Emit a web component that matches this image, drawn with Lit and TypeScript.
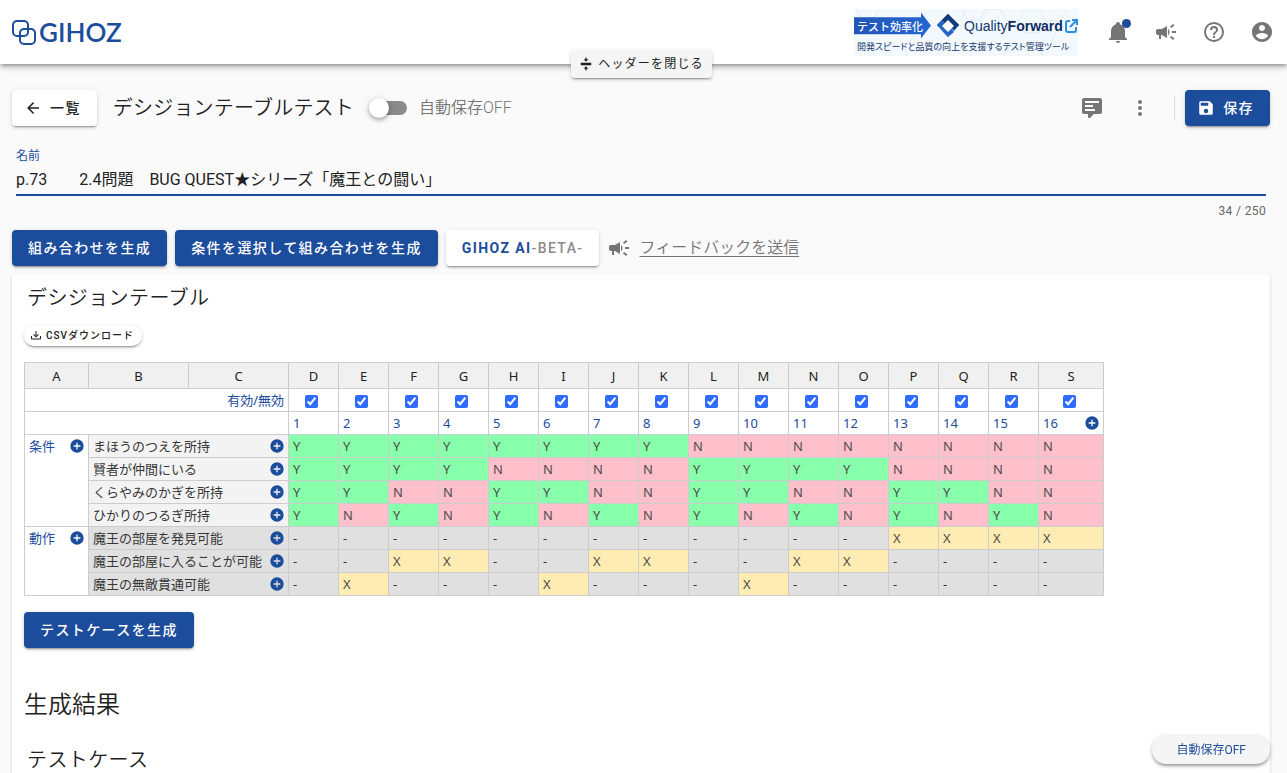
import { LitElement, html, css, svg, nothing } from "lit";
import { customElement, property } from "lit/decorators.js";
import { classMap } from "lit/directives/class-map.js";

const ICONS: Record<string, string> = {
  bell: "M21,19V20H3V19L5,17V11C5,7.9 7.03,5.17 10,4.29C10,4.19 10,4.1 10,4A2,2 0 0,1 12,2A2,2 0 0,1 14,4C14,4.1 14,4.19 14,4.29C16.97,5.17 19,7.9 19,11V17L21,19M14,21A2,2 0 0,1 12,23A2,2 0 0,1 10,21",
  campaign:
    "M18 11v2h4v-2h-4zm-2 6.61c.96.71 2.21 1.65 3.2 2.39.4-.53.8-1.07 1.2-1.6-.99-.74-2.24-1.68-3.2-2.4-.4.54-.8 1.08-1.2 1.61zM20.4 5.6c-.4-.53-.8-1.07-1.2-1.6-.99.74-2.24 1.68-3.2 2.4.4.53.8 1.07 1.2 1.6.96-.72 2.21-1.65 3.2-2.4zM4 9c-1.1 0-2 .9-2 2v2c0 1.1.9 2 2 2h1v4h2v-4h1l5 3V6L8 9H4zm11.5 3c0-1.33-.58-2.53-1.5-3.35v6.69c.92-.81 1.5-2.01 1.5-3.34z",
  help: "M11,18H13V16H11V18M12,2A10,10 0 0,0 2,12A10,10 0 0,0 12,22A10,10 0 0,0 22,12A10,10 0 0,0 12,2M12,20C7.59,20 4,16.41 4,12C4,7.59 7.59,4 12,4C16.41,4 20,7.59 20,12C20,16.41 16.41,20 12,20M12,6A4,4 0 0,0 8,10H10A2,2 0 0,1 12,8A2,2 0 0,1 14,10C14,12 11,11.75 11,15H13C13,12.75 16,12.5 16,10A4,4 0 0,0 12,6Z",
  account:
    "M12 2C6.48 2 2 6.48 2 12s4.48 10 10 10 10-4.48 10-10S17.52 2 12 2zm0 3c1.66 0 3 1.34 3 3s-1.34 3-3 3-3-1.34-3-3 1.34-3 3-3zm0 14.2c-2.5 0-4.71-1.28-6-3.22.03-1.99 4-3.08 6-3.08 1.99 0 5.97 1.09 6 3.08-1.29 1.94-3.5 3.22-6 3.22z",
  comment:
    "M9,22A1,1 0 0,1 8,21V18H4A2,2 0 0,1 2,16V4C2,2.89 2.9,2 4,2H20A2,2 0 0,1 22,4V16A2,2 0 0,1 20,18H13.9L10.2,21.71C10,21.9 9.75,22 9.5,22V22H9M5,5V7H19V5H5M5,9V11H13V9H5M5,13V15H15V13H5Z",
  dots: "M12,16A2,2 0 0,1 14,18A2,2 0 0,1 12,20A2,2 0 0,1 10,18A2,2 0 0,1 12,16M12,10A2,2 0 0,1 14,12A2,2 0 0,1 12,14A2,2 0 0,1 10,12A2,2 0 0,1 12,10M12,4A2,2 0 0,1 14,6A2,2 0 0,1 12,8A2,2 0 0,1 10,6A2,2 0 0,1 12,4Z",
  save: "M15,9H5V5H15M12,19A3,3 0 0,1 9,16A3,3 0 0,1 12,13A3,3 0 0,1 15,16A3,3 0 0,1 12,19M17,3H5C3.89,3 3,3.9 3,5V19A2,2 0 0,0 5,21H19A2,2 0 0,0 21,19V7L17,3Z",
  back: "M20,11V13H8L13.5,18.5L12.08,19.92L4.16,12L12.08,4.08L13.5,5.5L8,11H20Z",
  plus: "M17,13H13V17H11V13H7V11H11V7H13V11H17M12,2A10,10 0 0,0 2,12A10,10 0 0,0 12,22A10,10 0 0,0 22,12A10,10 0 0,0 12,2Z",
  download:
    "M2 12H4V17H20V12H22V17C22 18.11 21.11 19 20 19H4C2.9 19 2 18.11 2 17V12M12 15L17.55 9.54L16.13 8.13L13 11.25V2H11V11.25L7.88 8.13L6.46 9.55L12 15Z",
  collapse:
    "M8,20H11V23H13V20H16L12,16L8,20M16,4H13V1H11V4H8L12,8L16,4M3,10V14H21V10H3Z",
};

const icon = (name: string, size = 24) => html`
  <svg width=${size} height=${size} viewBox="0 0 24 24" fill="currentColor" aria-hidden="true">
    ${svg`<path d=${ICONS[name]}></path>`}
  </svg>
`;

const LETTERS = "DEFGHIJKLMNOPQRS".split("");

interface Row {
  label: string;
  cells: string;
}

const CONDITIONS: Row[] = [
  { label: "まほうのつえを所持", cells: "YYYYYYYYNNNNNNNN" },
  { label: "賢者が仲間にいる", cells: "YYYYNNNNYYYYNNNN" },
  { label: "くらやみのかぎを所持", cells: "YYNNYYNNYYNNYYNN" },
  { label: "ひかりのつるぎ所持", cells: "YNYNYNYNYNYNYNYN" },
];

const ACTIONS: Row[] = [
  { label: "魔王の部屋を発見可能", cells: "------------XXXX" },
  { label: "魔王の部屋に入ることが可能", cells: "--XX--XX--XX----" },
  { label: "魔王の無敵貫通可能", cells: "-X---X---X------" },
];

@customElement("decision-table")
export class DecisionTable extends LitElement {
  static styles = css`
    :host {
      display: block;
      overflow-x: auto;
    }
    table {
      box-sizing: border-box;
      width: 1080px;
      table-layout: fixed;
      border-collapse: separate;
      border-spacing: 0;
      border-top: 1px solid #ccc;
      border-left: 1px solid #ccc;
      font: 400 13px/22px "Noto Sans", "Noto Sans CJK JP", sans-serif;
      color: #373737;
    }
    .col-a {
      width: 64px;
    }
    .col-wide {
      width: 100px;
    }
    .col-case {
      width: 50px;
    }
    .col-last {
      width: 65px;
    }
    th,
    td {
      box-sizing: border-box;
      height: 23px;
      padding: 0 3px 0 4px;
      border-right: 1px solid #ccc;
      border-bottom: 1px solid #ccc;
      font-weight: 400;
      text-align: left;
      vertical-align: top;
      white-space: nowrap;
      background: #fff;
    }
    .letters th {
      height: 26px;
      line-height: 24px;
      padding: 1px 4px 0;
      text-align: center;
      color: #222;
      background: #f0f0f0;
    }
    .blue {
      color: #1c4c9c;
    }
    .end {
      padding-right: 4px;
      text-align: right;
    }
    .check {
      padding: 0 8px 0 4px;
      text-align: center;
      vertical-align: middle;
      line-height: 0;
    }
    .check input {
      width: 13px;
      height: 13px;
      margin: 3px 0 0;
      accent-color: #2f6bff;
    }
    .split {
      display: flex;
      align-items: center;
      justify-content: space-between;
    }
    .condition {
      background: #f3f3f3;
    }
    .action {
      background: #e0e0e0;
    }
    .yes {
      background: #8fa;
    }
    .no {
      background: #ffc0cb;
    }
    .hit {
      background: #ffecb3;
    }
    .yes,
    .no,
    .hit {
      color: #4c4c4c;
    }
    .none {
      background: #e0e0e0;
    }
    .add {
      display: flex;
      padding: 0;
      border: 0;
      background: none;
      color: #1c4c9c;
    }
  `;

  private add(label: string) {
    return html`<button class="add" aria-label=${label}>${icon("plus", 16)}</button>`;
  }

  private cell(v: string) {
    const classes = { yes: v === "Y", no: v === "N", hit: v === "X", none: v === "-" };
    return html`<td class=${classMap(classes)}>${v}</td>`;
  }

  private group(title: string, rows: Row[], kind: string) {
    return rows.map(
      (row, i) => html`
        <tr>
          ${i === 0
            ? html`<th class="blue" rowspan=${rows.length}>
                <div class="split">${title}${this.add(`${title}を追加`)}</div>
              </th>`
            : nothing}
          <th class=${kind} colspan="2">
            <div class="split">${row.label}${this.add(`${row.label}の値を追加`)}</div>
          </th>
          ${row.cells.split("").map((v) => this.cell(v))}
        </tr>
      `
    );
  }

  render() {
    const last = LETTERS.length - 1;
    return html`
      <table>
        <colgroup>
          <col class="col-a" />
          <col class="col-wide" />
          <col class="col-wide" />
          ${LETTERS.map((_, i) => html`<col class=${i === last ? "col-last" : "col-case"} />`)}
        </colgroup>
        <thead>
          <tr class="letters">
            ${["A", "B", "C", ...LETTERS].map((l) => html`<th>${l}</th>`)}
          </tr>
        </thead>
        <tbody>
          <tr>
            <th class="blue end" colspan="3">有効/無効</th>
            ${LETTERS.map(
              (_, i) => html`<td class="check">
                <input type="checkbox" checked aria-label=${`${i + 1} 有効/無効`} />
              </td>`
            )}
          </tr>
          <tr>
            <td colspan="3"></td>
            ${LETTERS.map(
              (_, i) => html`<td class="blue">
                <div class="split">${i + 1}${i === last ? this.add("列を追加") : nothing}</div>
              </td>`
            )}
          </tr>
          ${this.group("条件", CONDITIONS, "condition")} ${this.group("動作", ACTIONS, "action")}
        </tbody>
      </table>
    `;
  }
}

@customElement("promo-banner")
export class PromoBanner extends LitElement {
  static styles = css`
    :host {
      display: block;
    }
    .banner {
      position: relative;
      display: block;
      box-sizing: border-box;
      width: 224px;
      height: 47px;
      padding-top: 4px;
      overflow: hidden;
      background: #f4f9fe;
      color: #14386e;
      text-decoration: none;
    }
    .pattern {
      position: absolute;
      inset: 0;
    }
    .top {
      position: relative;
      display: flex;
      align-items: center;
      height: 26px;
    }
    .tag {
      box-sizing: border-box;
      width: 77px;
      height: 26px;
      padding-left: 3px;
      font: 500 11px/26px "Noto Sans CJK JP", sans-serif;
      color: #fff;
      background: linear-gradient(90deg, #2256b8, #2467d0);
      clip-path: polygon(0 18%, 87% 18%, 87% 0, 100% 50%, 87% 100%, 87% 84%, 0 84%);
    }
    .diamond {
      margin: 0 5px 0 6px;
    }
    .brand {
      font: 400 14px/26px "Liberation Sans", Arial, sans-serif;
    }
    .brand b {
      color: #0f2d63;
    }
    .open {
      margin-left: 2px;
    }
    .lead {
      position: relative;
      padding-left: 3px;
      font: 400 9px/16px "Noto Sans CJK JP", sans-serif;
      font-feature-settings: "palt";
      white-space: nowrap;
    }
  `;

  render() {
    return html`
      <a class="banner" href="#quality-forward">
        <svg class="pattern" width="224" height="47" fill="none" stroke="#dfebf6" aria-hidden="true">
          <path
            d="M106 12l7-12M108 0l6 11h12l6-11M126 11l6 10M132 0h14l6 11 12 1 7-12M164 12l7 12 14 0 7-12-7-12M192 12h14l7-12M206 12l7 12h11M30 47l6-11h12l6 11M54 36l6-9M150 47l6-10h13l7 10M2 0l6 9 12 0 5-9M182 36l7 11M182 36h14l6-12"
          ></path>
        </svg>
        <div class="top">
          <span class="tag">テスト効率化</span>
          <svg class="diamond" width="22" height="24" viewBox="0 0 22 24" aria-hidden="true">
            <path d="M11 0L0 11l6 6 5-6z" fill="#1b4488"></path>
            <path d="M11 0l11 11-5 6L5 6z" fill="#143a7c"></path>
            <path d="M22 11L11 23 5 17l6-6 5-6z" fill="#3f9cf0"></path>
            <path d="M11 0l11 11-5 5-11-10z" fill="#143a7c"></path>
            <path d="M0 11l5-5 12 12-6 5z" fill="#2764c4"></path>
            <path d="M11 6l6 6-6 6-6-6z" fill="#fff"></path>
          </svg>
          <span class="brand">Quality<b>Forward</b></span>
          <svg class="open" width="13" height="14" viewBox="0 0 13 14" fill="none" stroke="#2a8fe8" stroke-width="2" aria-hidden="true">
            <path d="M5 2H3Q1 2 1 4v7q0 2 2 2h6q2 0 2-2V8"></path>
            <path d="M7 1h5v5M12 1L5 8"></path>
          </svg>
        </div>
        <div class="lead">開発スピードと品質の向上を支援するテスト管理ツール</div>
      </a>
    `;
  }
}

@customElement("app-root")
export class AppRoot extends LitElement {
  @property({ type: Number }) limit = 250;
  @property() name = "p.73　　2.4問題　BUG QUEST★シリーズ「魔王との闘い」";

  static styles = css`
    :host {
      display: flex;
      flex-direction: column;
      min-height: 100vh;
      background: #fafafa;
      color: #212121;
      font: 400 16px/24px Roboto, "Noto Sans CJK JP", sans-serif;
    }
    button {
      font-family: inherit;
      cursor: pointer;
    }
    svg {
      flex: none;
    }
    .header {
      position: relative;
      display: flex;
      align-items: center;
      height: 64px;
      padding: 0 13px 0 12px;
      background: #fff;
      box-shadow: 0 2px 4px -1px rgba(0, 0, 0, 0.3), 0 3px 6px rgba(0, 0, 0, 0.24);
    }
    .logo {
      display: flex;
      align-items: center;
      gap: 2px;
      color: #1c4c9c;
      text-decoration: none;
      font: 600 26px/32px Lato, sans-serif;
    }
    .tools {
      display: flex;
      align-items: center;
      gap: 24px;
      margin-left: auto;
      color: #757575;
    }
    .promo {
      margin-right: 4px;
    }
    .icon {
      position: relative;
      display: flex;
      padding: 0;
      border: 0;
      background: none;
      color: #757575;
    }
    .dot {
      position: absolute;
      top: -1px;
      right: -1px;
      width: 9px;
      height: 9px;
      border-radius: 50%;
      background: #1c4c9c;
    }
    .fold-wrap {
      position: absolute;
      top: 50px;
      left: 0;
      right: 4px;
      display: flex;
      justify-content: center;
      height: 28px;
      pointer-events: none;
    }
    .fold-wrap button {
      pointer-events: auto;
    }
    .btn {
      display: inline-flex;
      align-items: center;
      height: 36px;
      padding: 0 16px;
      border: 0;
      border-radius: 4px;
      background: #fff;
      color: #212121;
      font-size: 14px;
      font-weight: 500;
      line-height: 20px;
      letter-spacing: 0.1em;
      white-space: nowrap;
      box-shadow: 0 3px 1px -2px rgba(0, 0, 0, 0.2), 0 2px 2px rgba(0, 0, 0, 0.14),
        0 1px 5px rgba(0, 0, 0, 0.12);
    }
    .primary {
      background: #1c4c9c;
      color: #fff;
    }
    .with-icon {
      gap: 8px;
      padding: 0 16px 0 12px;
    }
    .small {
      height: 28px;
      gap: 5px;
      padding: 0 8px;
      background: #f5f5f5;
      font-size: 12px;
      font-weight: 400;
    }
    .tiny {
      height: 20px;
      gap: 4px;
      padding: 0 8px 0 6px;
      border-radius: 10px;
      font-size: 10px;
    }
    .ai b {
      font-weight: 700;
      color: #1c4c9c;
    }
    .ai span {
      color: #8a8a8a;
    }
    .main {
      display: flex;
      flex-direction: column;
      flex: 1;
      padding: 26px 17px 0 12px;
    }
    .bar {
      display: flex;
      align-items: center;
      height: 36px;
    }
    .title {
      margin: 0 17px 0 16px;
      font-size: 20px;
      font-weight: 350;
      line-height: 32px;
      letter-spacing: 0.01em;
    }
    .switch {
      display: flex;
      align-items: center;
      gap: 12px;
      color: #757575;
      font-weight: 350;
    }
    .switch input {
      appearance: none;
      display: flex;
      align-items: center;
      width: 36px;
      height: 14px;
      margin: 0;
      border-radius: 7px;
      background: #8b8b8b;
    }
    .switch input::before {
      content: "";
      width: 20px;
      height: 20px;
      margin-left: -2px;
      flex: none;
      border-radius: 50%;
      background: #fff;
      box-shadow: 0 2px 4px rgba(0, 0, 0, 0.3), 0 1px 8px rgba(0, 0, 0, 0.12);
    }
    .bar-end {
      display: flex;
      align-items: center;
      margin-left: auto;
    }
    .bar-end .icon {
      margin-right: 24px;
    }
    .rule {
      width: 1px;
      height: 24px;
      margin: 0 10px 0 -2px;
      background: #e0e0e0;
    }
    .field {
      display: flex;
      flex-direction: column;
      padding: 20px 4px 0;
    }
    .field label {
      color: #1c4c9c;
      font-size: 12px;
      line-height: 20px;
    }
    .field input {
      height: 30px;
      padding: 0 0 4px;
      border: 0;
      border-bottom: 2px solid #1c4c9c;
      box-sizing: border-box;
      outline: 0;
      background: none;
      color: #212121;
      font: 400 16px/24px Roboto, "Noto Sans CJK JP", sans-serif;
    }
    .count {
      padding-top: 8px;
      color: #666;
      font-size: 12px;
      line-height: 14px;
      letter-spacing: 0.03em;
      text-align: right;
    }
    .actions {
      display: flex;
      align-items: center;
      gap: 8px;
      padding: 12px 0 8px;
    }
    .feedback {
      display: flex;
      align-items: center;
      gap: 8px;
      color: #757575;
      font-weight: 350;
      text-underline-offset: 3px;
    }
    .card {
      flex: 1;
      padding: 8px 12px 0;
      border-radius: 4px 4px 0 0;
      background: #fff;
      box-shadow: 0 2px 1px -1px rgba(0, 0, 0, 0.1), 0 1px 3px rgba(0, 0, 0, 0.18);
    }
    .section {
      display: block;
      margin: 0;
      padding: 0 3px;
      font-size: 20px;
      font-weight: 350;
      line-height: 32px;
      letter-spacing: 0.02em;
    }
    .csv {
      display: flex;
      padding: 12px 0 16px;
    }
    .generate {
      padding: 16px 0 41px;
      display: flex;
    }
    .result {
      margin: 0 0 23px;
      font-size: 24px;
      font-weight: 350;
      line-height: 32px;
    }
    .toast {
      position: fixed;
      right: 17px;
      bottom: 9px;
      height: 28px;
      padding: 0 24px;
      border: 0;
      border-radius: 14px;
      background: #f5f5f5;
      color: #1c4c9c;
      font-size: 12px;
      line-height: 28px;
      box-shadow: 0 3px 3px -1px rgba(0, 0, 0, 0.3), 0 1px 5px rgba(0, 0, 0, 0.2);
    }
  `;

  render() {
    return html`
      <header class="header">
        <a class="logo" href="#home">
          <svg width="25" height="25" viewBox="0 0 25 25" fill="none" stroke="currentColor" stroke-width="2" aria-hidden="true">
            <rect x="1" y="1" width="15" height="15" rx="4"></rect>
            <rect x="8" y="9" width="15" height="15" rx="4"></rect>
          </svg>
          <span>GIHOZ</span>
        </a>
        <div class="tools">
          <promo-banner class="promo"></promo-banner>
          <button class="icon" aria-label="お知らせ">${icon("bell")}<span class="dot"></span></button>
          <button class="icon" aria-label="フィードバック">${icon("campaign")}</button>
          <button class="icon" aria-label="ヘルプ">${icon("help")}</button>
          <button class="icon" aria-label="アカウント">${icon("account")}</button>
        </div>
        <div class="fold-wrap">
          <button class="btn small">${icon("collapse", 14)}ヘッダーを閉じる</button>
        </div>
      </header>

      <main class="main">
        <div class="bar">
          <button class="btn with-icon">${icon("back", 18)}一覧</button>
          <h1 class="title">デシジョンテーブルテスト</h1>
          <label class="switch"><input type="checkbox" role="switch" />自動保存OFF</label>
          <div class="bar-end">
            <button class="icon" aria-label="コメント">${icon("comment")}</button>
            <button class="icon" aria-label="メニュー">${icon("dots")}</button>
            <span class="rule"></span>
            <button class="btn primary with-icon">${icon("save", 18)}保存</button>
          </div>
        </div>

        <div class="field">
          <label for="name">名前</label>
          <input id="name" type="text" .value=${this.name} />
          <div class="count">${this.name.length} / ${this.limit}</div>
        </div>

        <div class="actions">
          <button class="btn primary">組み合わせを生成</button>
          <button class="btn primary">条件を選択して組み合わせを生成</button>
          <button class="btn ai"><b>GIHOZ AI</b><span>-BETA-</span></button>
          <a class="feedback" href="#feedback">${icon("campaign")}フィードバックを送信</a>
        </div>

        <section class="card">
          <h2 class="section">デシジョンテーブル</h2>
          <div class="csv">
            <button class="btn tiny">${icon("download", 12)}CSVダウンロード</button>
          </div>
          <decision-table></decision-table>
          <div class="generate">
            <button class="btn primary">テストケースを生成</button>
          </div>
          <h2 class="result">生成結果</h2>
          <h3 class="section">テストケース</h3>
        </section>
      </main>
      <button class="toast">自動保存OFF</button>
    `;
  }
}
